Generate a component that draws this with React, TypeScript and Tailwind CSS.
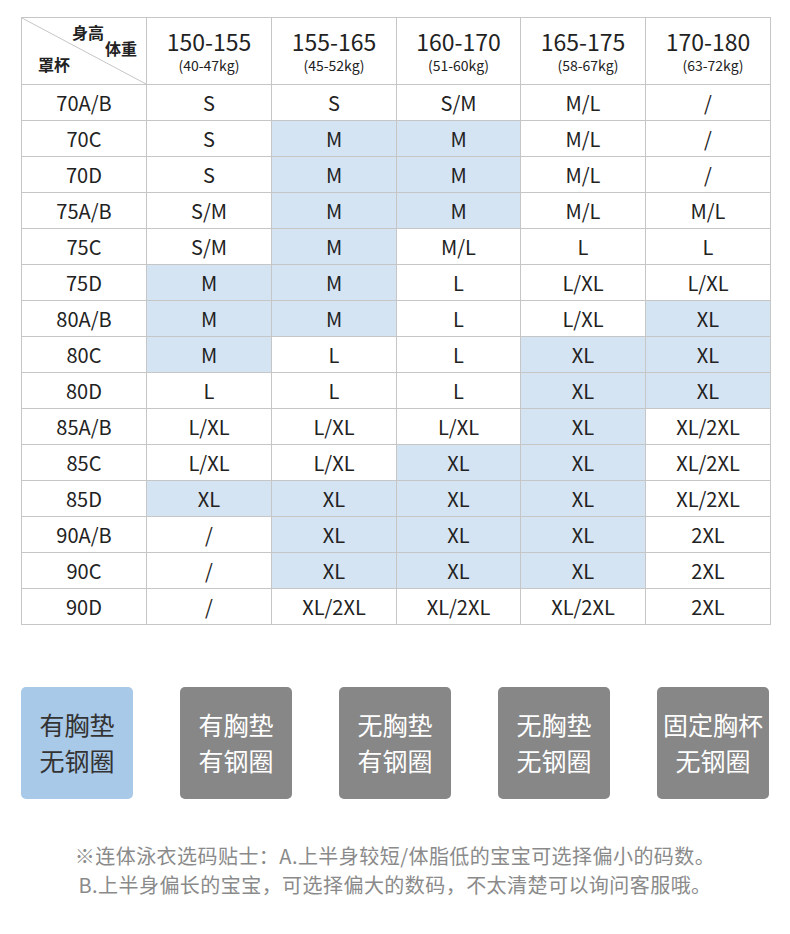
const font = { fontFamily: '"Noto Sans CJK SC", "Noto Sans", sans-serif' };

const heads = [
  ["150-155", "(40-47kg)"],
  ["155-165", "(45-52kg)"],
  ["160-170", "(51-60kg)"],
  ["165-175", "(58-67kg)"],
  ["170-180", "(63-72kg)"],
];

// size, then which columns are blue
const rows: [string, string[], number[]][] = [
  ["70A/B", ["S", "S", "S/M", "M/L", "/"], []],
  ["70C", ["S", "M", "M", "M/L", "/"], [1, 2]],
  ["70D", ["S", "M", "M", "M/L", "/"], [1, 2]],
  ["75A/B", ["S/M", "M", "M", "M/L", "M/L"], [1, 2]],
  ["75C", ["S/M", "M", "M/L", "L", "L"], [1]],
  ["75D", ["M", "M", "L", "L/XL", "L/XL"], [0, 1]],
  ["80A/B", ["M", "M", "L", "L/XL", "XL"], [0, 1, 4]],
  ["80C", ["M", "L", "L", "XL", "XL"], [0, 3, 4]],
  ["80D", ["L", "L", "L", "XL", "XL"], [3, 4]],
  ["85A/B", ["L/XL", "L/XL", "L/XL", "XL", "XL/2XL"], [3]],
  ["85C", ["L/XL", "L/XL", "XL", "XL", "XL/2XL"], [2, 3]],
  ["85D", ["XL", "XL", "XL", "XL", "XL/2XL"], [0, 1, 2, 3]],
  ["90A/B", ["/", "XL", "XL", "XL", "2XL"], [1, 2, 3]],
  ["90C", ["/", "XL", "XL", "XL", "2XL"], [1, 2, 3]],
  ["90D", ["/", "XL/2XL", "XL/2XL", "XL/2XL", "2XL"], []],
];

const boxes = [
  ["有胸垫", "无钢圈", true],
  ["有胸垫", "有钢圈", false],
  ["无胸垫", "有钢圈", false],
  ["无胸垫", "无钢圈", false],
  ["固定胸杯", "无钢圈", false],
] as const;

export default function App() {
  return (
    <div className="w-[790px] h-[934px] bg-white text-[#222]" style={font}>
      <div className="pt-[17px] pl-[21px]">
        <table className="w-[749px] table-fixed border-collapse">
          <colgroup>
            <col className="w-[125px]" />
            <col className="w-[125px]" />
            <col className="w-[125px]" />
            <col className="w-[124px]" />
            <col className="w-[125px]" />
            <col className="w-[125px]" />
          </colgroup>
          <thead>
            <tr className="h-[67px]">
              <th className="relative border border-[#c6c6c6] p-0 align-top">
                <svg className="absolute inset-0 h-full w-full" preserveAspectRatio="none" viewBox="0 0 100 100">
                  <line x1="0" y1="0" x2="100" y2="100" stroke="#c6c6c6" strokeWidth="1" vectorEffect="non-scaling-stroke" />
                </svg>
                <div className="relative flex flex-col pt-[6px] text-[16px] font-bold leading-[16px]">
                  <span className="self-end pr-[42px]">身高</span>
                  <span className="self-end pr-[9px]">体重</span>
                  <span className="self-start pl-[16px]">罩杯</span>
                </div>
              </th>
              {heads.map(([h, s], i) => (
                <th key={h} className="border border-[#c6c6c6] p-0 font-normal">
                  <div className="flex flex-col items-center gap-[6px]">
                    <span className="text-[23px] leading-[22px]">{h}</span>
                    <span className={`text-[14px] leading-[14px] ${i >= 3 ? "pl-[10px]" : ""}`}>{s}</span>
                  </div>
                </th>
              ))}
            </tr>
          </thead>
          <tbody>
            {rows.map(([label, cells, blue]) => (
              <tr key={label} className="h-[36px]">
                <td className="border border-[#c6c6c6] p-0 text-center text-[20px]">{label}</td>
                {cells.map((c, i) => (
                  <td
                    key={i}
                    className={`border border-[#c6c6c6] p-0 text-center text-[20px] ${blue.includes(i) ? "bg-[#d5e4f3]" : ""}`}
                  >
                    {c}
                  </td>
                ))}
              </tr>
            ))}
          </tbody>
        </table>
      </div>

      <div className="mt-[62px] flex gap-[47px] pl-[21px]">
        {boxes.map(([a, b, active], i) => (
          <div
            key={i}
            className={`flex h-[112px] w-[112px] flex-col items-center justify-center rounded-[5px] pb-[3px] text-[25px] leading-[36px] ${
              active ? "bg-[#a9c9e9] text-[#333]" : "bg-[#878787] text-white"
            }`}
          >
            <span>{a}</span>
            <span>{b}</span>
          </div>
        ))}
      </div>

      <div className="mt-[42px] flex flex-col items-center text-[20px] leading-[29px] tracking-[0.45px] text-[#8a8a8a]">
        <span>※连体泳衣选码贴士：A.上半身较短/体脂低的宝宝可选择偏小的码数。</span>
        <span>B.上半身偏长的宝宝，可选择偏大的数码，不太清楚可以询问客服哦。</span>
      </div>
    </div>
  );
}
